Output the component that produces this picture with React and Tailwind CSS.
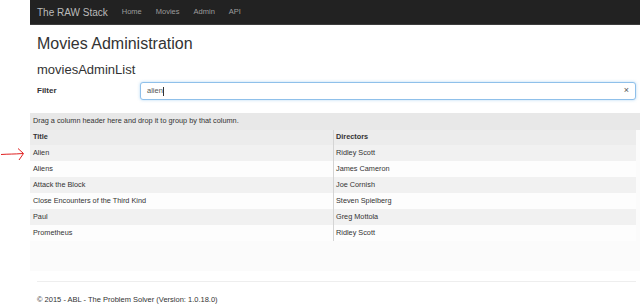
const movies = [
  { title: 'Alien', director: 'Ridley Scott' },
  { title: 'Aliens', director: 'James Cameron' },
  { title: 'Attack the Block', director: 'Joe Cornish' },
  { title: 'Close Encounters of the Third Kind', director: 'Steven Spielberg' },
  { title: 'Paul', director: 'Greg Mottola' },
  { title: 'Prometheus', director: 'Ridley Scott' },
];

function NavBar() {
  return (
    <nav className="h-[25px] bg-[#222] border-b border-[#3c3c3c] flex items-center px-[7px]">
      <span className="text-[10px] text-[#bbb] mr-[14px]">The RAW Stack</span>
      <ul className="flex gap-[14px] text-[7.5px] text-[#9d9d9d]">
        <li>Home</li>
        <li>Movies</li>
        <li>Admin</li>
        <li>API</li>
      </ul>
    </nav>
  );
}

function MoviesGrid() {
  return (
    <div className="mt-[13px] bg-[#fbfbfb] h-[158px] text-[7.3px] text-[#333]">
      <div className="h-[17px] bg-[#e8e8e8] flex items-center px-[3px]">
        Drag a column header here and drop it to group by that column.
      </div>
      <div className="mr-[4px]">
        <div className="flex h-[15px] bg-[#ececec] font-bold items-center">
          <div className="w-[303px] px-[3px]">Title</div>
          <div className="flex-1 h-full flex items-center px-[2px] border-l border-[#d4d4d4]">Directors</div>
        </div>
        {movies.map((m, i) => (
          <div key={m.title} className={`flex h-[16px] items-center ${i % 2 === 0 ? 'bg-[#f1f1f1]' : 'bg-[#fdfdfd]'}`}>
            <div className="w-[303px] px-[3px]">{m.title}</div>
            <div className="flex-1 h-full flex items-center px-[2px] border-l border-[#d4d4d4]">{m.director}</div>
          </div>
        ))}
      </div>
    </div>
  );
}

export default function App() {
  return (
    <div className="relative w-[640px] h-[307px] overflow-hidden bg-white font-['Liberation_Sans',Arial,sans-serif]">
      <svg className="absolute left-0 top-[146px]" width="26" height="16" viewBox="0 0 26 16">
        <path d="M1 8.5 C8 8 14 8.2 23 7.5" stroke="#e02020" strokeWidth="1" fill="none" />
        <path d="M18 2.5 L23.5 7.5 L19 14" stroke="#e02020" strokeWidth="1" fill="none" />
      </svg>
      <div className="ml-[30px]">
        <NavBar />
        <div className="pr-[4px]">
          <div className="px-[7px]">
            <h1 className="mt-[10px] text-[16px] leading-[18px] text-[#333]">Movies Administration</h1>
            <h2 className="mt-[9px] text-[13px] leading-[15px] text-[#333]">moviesAdminList</h2>
          </div>
          <div className="flex mt-[5px] pl-[7px]">
            <label className="w-[103px] pt-[3px] text-[8px] font-bold text-[#333]">Filter</label>
            <div className="flex-1 h-[18px] rounded-[3px] border border-[#8fc0ea] shadow-[0_0_3px_rgba(102,175,233,0.5)] bg-white flex items-center px-[6px] text-[7.5px] text-[#555]">
              <span>alien</span>
              <span className="w-px h-[9px] bg-[#333]" />
              <span className="ml-auto text-[9px] text-[#555]">×</span>
            </div>
          </div>
        </div>
        <MoviesGrid />
        <div className="mx-[7px] mr-[4px] mt-[10px] border-t border-[#eee]" />
        <footer className="px-[7px] mt-[12px] text-[7.5px] text-[#333]">
          © 2015 - ABL - The Problem Solver (Version: 1.0.18.0)
        </footer>
      </div>
    </div>
  );
}
